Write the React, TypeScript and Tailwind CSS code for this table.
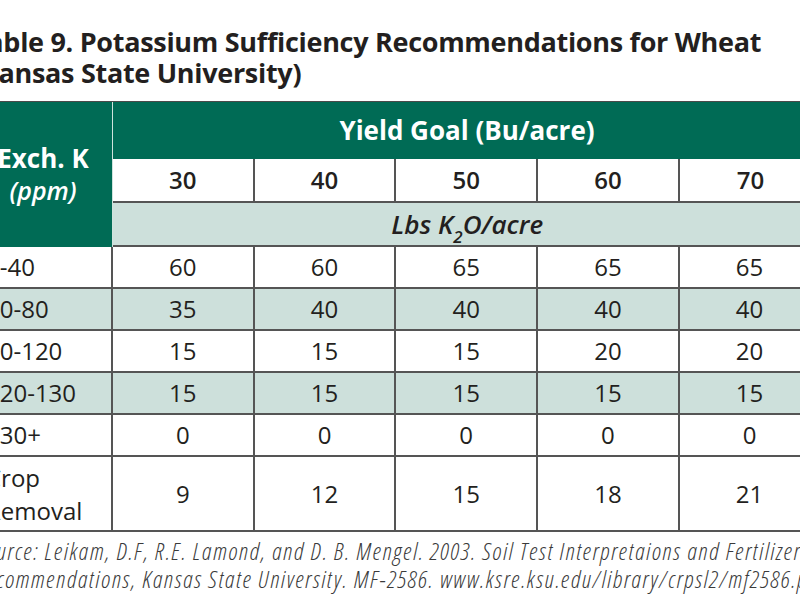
import React from "react";

const cols = ["30", "40", "50", "60", "70"];
const rows: { label: React.ReactNode; vals: string[]; shade: boolean; tall?: boolean }[] = [
  { label: "0-40", vals: ["60", "60", "65", "65", "65"], shade: false },
  { label: "40-80", vals: ["35", "40", "40", "40", "40"], shade: true },
  { label: "80-120", vals: ["15", "15", "15", "20", "20"], shade: false },
  { label: "120-130", vals: ["15", "15", "15", "15", "15"], shade: true },
  { label: "130+", vals: ["0", "0", "0", "0", "0"], shade: false },
  {
    label: (
      <span className="flex flex-col leading-[33px]">
        <span>Crop</span>
        <span>Removal</span>
      </span>
    ),
    vals: ["9", "12", "15", "18", "21"],
    shade: false,
    tall: true,
  },
];

export default function App() {
  return (
    <div
      className="w-[800px] h-[600px] overflow-hidden bg-white text-[#231f20]"
      style={{ fontFamily: '"Open Sans", "Noto Sans", sans-serif' }}
    >
      <div className="ml-[-30px] w-[860px]">
        <div className="pt-[26px] pl-[2px] text-[27px] font-bold leading-[31px] tracking-[-0.3px] whitespace-nowrap">
          <div>Table 9. Potassium Sufficiency Recommendations for Wheat</div>
          <div>(Kansas State University)</div>
        </div>

        <div className="mt-[13px]">
          <div className="flex border-t border-[#4a4a4a]">
            <div className="w-[143px] h-[145px] bg-[#006b55] text-white flex flex-col items-center justify-center border-r border-[#cfe3dd] pl-[4px]">
              <div className="text-[26px] font-bold leading-[33px] whitespace-nowrap">Exch. K</div>
              <div className="text-[25px] font-semibold italic leading-[31px] mb-[2px]">(ppm)</div>
            </div>
            <div className="flex flex-col">
              <div className="h-[57px] bg-[#006b55] text-white text-[26px] font-bold flex items-center justify-center w-[708px]">
                Yield Goal (Bu/acre)
              </div>
              <div className="flex h-[44px] border-b-2 border-[#555]">
                {cols.map((c, i) => (
                  <div
                    key={c}
                    className={`w-[141.7px] shrink-0 flex items-center justify-center text-[24px] font-semibold ${
                      i < 4 ? "border-r-2 border-[#555]" : ""
                    }`}
                  >
                    {c}
                  </div>
                ))}
              </div>
              <div className="h-[44px] bg-[#cde0db] border-b-2 border-[#555] flex items-center justify-center text-[26px] font-semibold italic">
                <span className="whitespace-nowrap">
                  Lbs K<sub className="text-[17px] align-[-5px]">2</sub>O/acre
                </span>
              </div>
            </div>
          </div>

          {rows.map((r, ri) => (
            <div
              key={ri}
              className={`flex border-b-2 border-[#555] ${r.tall ? "h-[75px]" : "h-[42px]"} ${
                r.shade ? "bg-[#cde0db]" : "bg-white"
              }`}
            >
              <div className="w-[143px] shrink-0 border-r-2 border-[#555] flex items-center pl-[16px] text-[24px] whitespace-nowrap">
                {r.label}
              </div>
              {r.vals.map((v, i) => (
                <div
                  key={i}
                  className="w-[141.7px] shrink-0 border-r-2 border-[#555] flex items-center justify-center text-[24px]"
                >
                  {v}
                </div>
              ))}
            </div>
          ))}
        </div>

        <div className="pl-[6px] pt-[5px] text-[24px] italic font-light leading-[28px] text-[#3a3a3a] tracking-[1.6px] whitespace-nowrap [font-stretch:87.5%]">
          <div>
            Source: Leikam, D.F, R.E. Lamond, and D. B. Mengel. 2003. Soil Test Interpretaions and Fertilizer
          </div>
          <div>
            Recommendations, Kansas State University. MF-2586. www.ksre.ksu.edu/library/crpsl2/mf2586.pdf
          </div>
        </div>
      </div>
    </div>
  );
}
